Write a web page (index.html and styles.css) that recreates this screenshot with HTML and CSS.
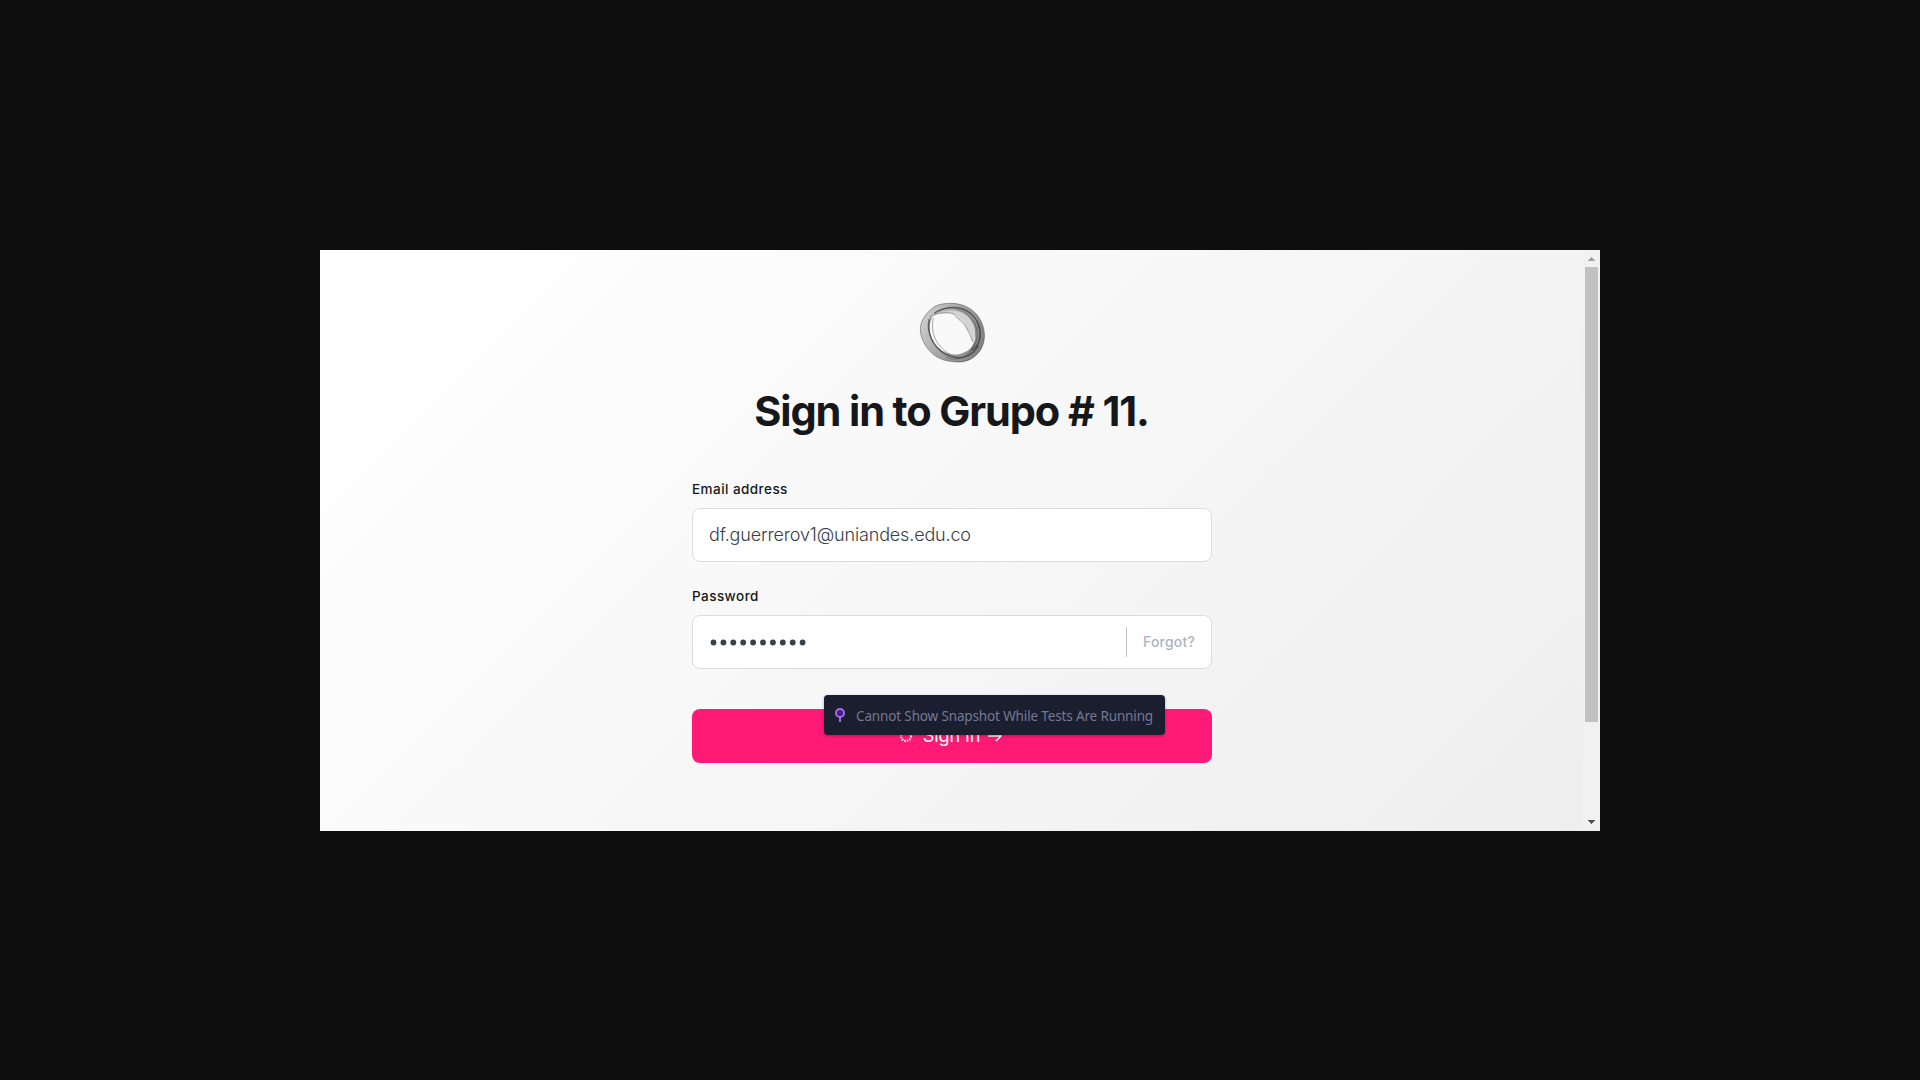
FILE: index.html
```html
<!DOCTYPE html>
<html lang="en">
<head>
<meta charset="utf-8">
<title>Sign in to Grupo # 11.</title>
<link rel="stylesheet" href="styles.css">
</head>
<body>
<div class="frame">
  <main class="page">
    <svg class="logo" viewBox="-1 0 68.500 63.500" preserveAspectRatio="none" fill="none">
      <defs>
        <linearGradient id="ring" x1="0" y1="0.3" x2="1" y2="0.7">
          <stop offset="0" stop-color="#cdcdcd"/><stop offset="0.45" stop-color="#a6a6a6"/><stop offset="1" stop-color="#808080"/>
        </linearGradient>
      </defs>
      <path fill="url(#ring)" fill-rule="evenodd" d="M28 2.500C42 1 54 7 60 17C66 27 67 39 61 49C54 59 44 62 33 60C20 59 11 52 5 40C0 29 2 19 10 11C15 5 20 3 28 2.500ZM15 15C10 23 10 34 16 43C23 51 35 56 45 51C51 49 55 44 56 36C56 23 48 12 36 11C28 10 20 11 15 15Z"/>
      <path fill="#d3d3d3" d="M18 13C27 8 43 7 51 18C57 26 57 34 54 41C52 36 51 31 48 28C46 23 43 19 40 18C37 14 34 12 29 12C25 12 21 13 18 13Z"/>
      <g stroke="#333">
        <path stroke-opacity=".65" stroke-width="1.4" d="M16 12C30 3 46 5 55 16C64 27 62 42 53 49M11 18C8 30 14 45 27 53C42 60 53 55 59 44"/>
        <path stroke-opacity=".6" stroke-width=".7" d="M28 2.500C42 1 54 7 60 17C66 27 67 39 61 49C54 59 44 62 33 60C20 59 11 52 5 40C0 29 2 19 10 11C15 5 20 3 28 2.500ZM13 14C8 28 12 43 24 51M15 17C12 31 17 44 31 53M27 56C40 60 51 56 55 42M15 14C23 11 30 11 35 13C38 18 44 20 47 26C50 31 51 35 54 41M20 10C32 4 45 8 52 17C60 27 60 40 52 48M57 20C62 30 62 39 57 47"/>
      </g>
    </svg>
    <h1 class="title">Sign in to Grupo # 11.</h1>
    <form class="form">
      <div class="label">Email address</div>
      <div class="field"><span class="value">df.guerrerov1@uniandes.edu.co</span></div>
      <div class="label second">Password</div>
      <div class="field">
        <svg class="dots" viewBox="0 0 100 8">
          <g fill="#394047"><circle cx="4.500" cy="4.500" r="2.9"/><circle cx="14.400" cy="4.500" r="2.9"/><circle cx="24.300" cy="4.500" r="2.9"/><circle cx="34.200" cy="4.500" r="2.9"/><circle cx="44.100" cy="4.500" r="2.9"/><circle cx="54" cy="4.500" r="2.9"/><circle cx="63.900" cy="4.500" r="2.9"/><circle cx="73.800" cy="4.500" r="2.9"/><circle cx="83.700" cy="4.500" r="2.9"/><circle cx="93.600" cy="4.500" r="2.9"/></g>
        </svg>
        <span class="forgot">Forgot?</span>
      </div>
      <div class="submit">
        <svg class="spinner" viewBox="0 0 14 14"><circle cx="7" cy="7" r="5" fill="none" stroke="#fff" stroke-opacity=".8" stroke-width="2.4" stroke-dasharray="1.6 1.018"/></svg>
        <span>Sign in</span>
        <svg class="arrow" viewBox="0 0 14 12" fill="none" stroke="#fff" stroke-width="1.4"><path d="M0 6H13M8 1L13 6L8 11"/></svg>
        <div class="notice">
          <svg class="pin" viewBox="0 0 12 16"><path d="M6 10V15" stroke="#a469e8" stroke-width="2"/><circle cx="6" cy="6" r="4.1" fill="#472278" stroke="#a469e8" stroke-width="2"/></svg>
          <span class="message">Cannot Show Snapshot While Tests Are Running</span>
        </div>
      </div>
    </form>
  </main>
  <div class="scrollbar">
    <svg class="step" viewBox="0 0 17 17" shape-rendering="crispEdges"><path fill="#a3a3a3" d="M8 7h1v1h1v1h1v1h1v1H5v-1h1V9h1V8h1z"/></svg>
    <div class="thumb"></div>
    <svg class="step" viewBox="0 0 17 17" shape-rendering="crispEdges"><path fill="#505050" d="M5 6h7v1h-1v1h-1v1H9v1H8V9H7V8H6V7H5z"/></svg>
  </div>
</div>
</body>
</html>
```
FILE: styles.css
```css
* { box-sizing: border-box; }
body {
  margin: 0;
  height: 1080px;
  padding-top: 250px;
  background: #0e0e0e;
  font-family: Inter, "Liberation Sans", sans-serif;
  overflow: hidden;
}
svg { display: block; flex: none; }
.frame {
  display: flex;
  width: 1280px;
  height: 581px;
  margin: 0 auto;
  background: #f1f1f1;
}
.page {
  display: flex;
  flex-direction: column;
  align-items: center;
  width: 1263px;
  padding: 51px 0 0 1px;
  background: linear-gradient(135deg, #fff 5%, #eee 100%);
}
.logo { width: 70px; height: 64px; }
.title {
  margin: 21px 0 0;
  padding-right: 1px;
  font-size: 41.5px;
  line-height: 50px;
  font-weight: 700;
  letter-spacing: -1.12px;
  color: #15171a;
  white-space: nowrap;
}
.form { width: 520px; margin-top: 44px; }
.label {
  height: 28px;
  font-size: 13.5px;
  line-height: 18px;
  font-weight: 500;
  letter-spacing: .45px;
  color: #15171a;
}
.second { margin-top: 25px; }
.field {
  display: flex;
  align-items: center;
  height: 54px;
  padding: 0 16px;
  border: 1px solid #dcdcdc;
  border-radius: 8px;
  background: #fff;
}
.value {
  font-size: 18px;
  line-height: 24px;
  letter-spacing: -.16px;
  color: #394047;
  font-weight: 300;
}
.dots { width: 100px; height: 8px; }
.forgot {
  margin-left: auto;
  padding-left: 16px;
  border-left: 1px solid #c0c4c8;
  font-size: 14px;
  line-height: 30px;
  font-weight: 500;
  letter-spacing: .2px;
  color: #abb4be;
}
.submit {
  position: relative;
  display: flex;
  align-items: center;
  justify-content: center;
  height: 54px;
  margin-top: 40px;
  padding-right: 3px;
  border-radius: 8px;
  background: #ff1a75;
  color: #fff;
  font-size: 18px;
  line-height: 24px;
}
.spinner { width: 14px; height: 14px; margin-right: 10px; }
.arrow { width: 14px; height: 12px; margin-left: 8px; }
.notice {
  position: absolute;
  left: 132px;
  top: -14px;
  display: flex;
  align-items: center;
  width: 341px;
  height: 40px;
  padding-left: 10px;
  border-radius: 4px;
  background: #1b1e2e;
  box-shadow: 0 1px 3px rgba(0, 0, 0, .3);
  color: #747994;
  font-family: "Noto Sans", sans-serif;
  font-size: 13.5px;
  letter-spacing: -.14px;
  white-space: nowrap;
}
.message { padding-top: 2px; }
.pin { width: 12px; height: 16px; margin-right: 10px; }
.scrollbar { display: flex; flex-direction: column; width: 17px; }
.step { width: 17px; height: 17px; }
.thumb { width: 13px; height: 455px; margin: 0 2px 92px; background: #c1c1c1; }
```
